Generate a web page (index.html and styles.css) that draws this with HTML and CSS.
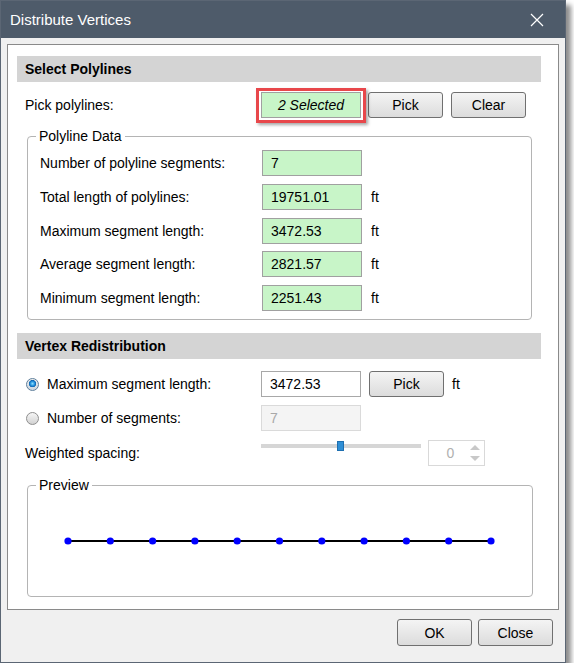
FILE: index.html
```html
<!DOCTYPE html>
<html lang="en">
  <head>
    <meta charset="UTF-8" />
    <meta name="viewport" content="width=device-width, initial-scale=1.0"/>
    <title>Distribute Vertices</title>
    <link rel="stylesheet" href="styles.css">
  </head>
  <body>
    <div class="window">
      <div class="titlebar">
        <span class="title">Distribute Vertices</span>
        <svg class="close" width="14" height="14" viewBox="0 0 14 14">
          <path d="M1 1 L13 13 M13 1 L1 13" stroke="#fff" stroke-width="1.2" fill="none"/>
        </svg>
      </div>
      <div class="content">
        <div class="panel">
          <div class="section-head">Select Polylines</div>
          <div class="pick-row">
            <span class="label">Pick polylines:</span>
            <span class="field green selected">2 Selected</span>
            <button type="button" class="btn">Pick</button>
            <button type="button" class="btn clear">Clear</button>
          </div>

          <fieldset class="group data">
            <legend>Polyline Data</legend>
            <div class="data-row">
              <span class="label">Number of polyline segments:</span>
              <span class="field green">7</span>
            </div>
            <div class="data-row">
              <span class="label">Total length of polylines:</span>
              <span class="field green">19751.01</span>
              <span class="unit">ft</span>
            </div>
            <div class="data-row">
              <span class="label">Maximum segment length:</span>
              <span class="field green">3472.53</span>
              <span class="unit">ft</span>
            </div>
            <div class="data-row">
              <span class="label">Average segment length:</span>
              <span class="field green">2821.57</span>
              <span class="unit">ft</span>
            </div>
            <div class="data-row">
              <span class="label">Minimum segment length:</span>
              <span class="field green">2251.43</span>
              <span class="unit">ft</span>
            </div>
          </fieldset>

          <div class="section-head second">Vertex Redistribution</div>
          <div class="opt-row first">
            <span class="radio checked"></span>
            <span class="opt-label">Maximum segment length:</span>
            <span class="field input">3472.53</span>
            <button type="button" class="btn">Pick</button>
            <span class="unit">ft</span>
          </div>
          <div class="opt-row second-opt">
            <span class="radio"></span>
            <span class="opt-label">Number of segments:</span>
            <span class="field input disabled">7</span>
          </div>
          <div class="opt-row weight">
            <span class="label">Weighted spacing:</span>
            <div class="slider">
              <div class="track"></div>
              <div class="thumb"></div>
            </div>
            <div class="spinner">
              <span class="spin-value">0</span>
              <div class="spin-arrows">
                <svg width="12" height="22" viewBox="0 0 12 22">
                  <path d="M1 8 L6 3 L11 8 Z" fill="#c8c8c8"/>
                  <path d="M1 14 L6 19 L11 14 Z" fill="#c8c8c8"/>
                </svg>
              </div>
            </div>
          </div>

          <fieldset class="group preview">
            <legend>Preview</legend>
            <svg class="preview-line" width="504" height="92" viewBox="0 0 504 92">
              <line x1="40" y1="47" x2="463" y2="47" stroke="#000" stroke-width="2"/>
              <g fill="#0000ff">
                <circle cx="40" cy="47" r="3.6"/>
                <circle cx="82.3" cy="47" r="3.6"/>
                <circle cx="124.6" cy="47" r="3.6"/>
                <circle cx="166.9" cy="47" r="3.6"/>
                <circle cx="209.2" cy="47" r="3.6"/>
                <circle cx="251.5" cy="47" r="3.6"/>
                <circle cx="293.8" cy="47" r="3.6"/>
                <circle cx="336.1" cy="47" r="3.6"/>
                <circle cx="378.4" cy="47" r="3.6"/>
                <circle cx="420.7" cy="47" r="3.6"/>
                <circle cx="463" cy="47" r="3.6"/>
              </g>
            </svg>
          </fieldset>
        </div>
        <div class="footer">
          <button type="button" class="btn wide">OK</button>
          <button type="button" class="btn wide">Close</button>
        </div>
      </div>
    </div>
  </body>
</html>
```

FILE: styles.css
```css
body {
  margin: 0;
  background: #fff;
  font-family: 'Liberation Sans', Arial, sans-serif;
  font-size: 14px;
  color: #000;
}

.window {
  width: 564px;
  height: 661px;
  border: 1px solid #5b6674;
  background: #f0f0f0;
  box-shadow: 5px 5px 5px rgba(0, 0, 0, 0.45);
  display: flex;
  flex-direction: column;
}

.titlebar {
  height: 37px;
  background: #4e5b6a;
  color: #fff;
  display: flex;
  align-items: center;
  justify-content: space-between;
  padding: 0 21px 0 9px;
  flex-shrink: 0;
}

.title {
  font-size: 15px;
}

.content {
  flex: 1;
  display: flex;
  flex-direction: column;
}

.panel {
  margin: 6px 6px 0 6px;
  height: 566px;
  box-sizing: border-box;
  background: #fff;
  border: 1px solid #8a8a8a;
  padding: 11px 17px 0 9px;
}

.section-head {
  height: 26px;
  line-height: 26px;
  background: #d4d4d4;
  font-weight: bold;
  padding-left: 8px;
}

.section-head.second {
  margin-top: 13px;
}

.pick-row {
  display: flex;
  align-items: center;
  height: 28px;
  margin-top: 9px;
  padding-left: 8px;
}

.label {
  width: 236px;
  flex-shrink: 0;
}

.field {
  width: 100px;
  height: 26px;
  box-sizing: border-box;
  line-height: 24px;
  padding-left: 8px;
  border: 1px solid #a0a0a0;
  flex-shrink: 0;
}

.green {
  background: #c8f5c8;
}

.selected {
  position: relative;
  font-style: italic;
  text-align: center;
  padding-left: 0;
}

.selected::after {
  content: "";
  position: absolute;
  left: -6px;
  top: -5px;
  right: -6px;
  bottom: -6px;
  border: 3px solid #e8474b;
  box-shadow: 2px 2px 3px rgba(0, 0, 0, 0.35);
}

.btn {
  width: 75px;
  height: 26px;
  margin-left: 7px;
  font-family: inherit;
  font-size: 14px;
  color: #000;
  border: 1px solid #707070;
  border-radius: 3px;
  background: linear-gradient(#f4f4f4, #dcdcdc);
  padding: 0;
}

.btn.clear {
  margin-left: 8px;
}

.group {
  margin: 0;
  border: 1px solid #b4b4b4;
  border-radius: 4px;
  padding: 0 12px;
}

.group legend {
  padding: 0 3px;
  margin-left: -4px;
  line-height: 18px;
}

.data {
  margin: 8px 9px 0 10px;
  padding-top: 5px;
  padding-bottom: 8px;
  display: flex;
  flex-direction: column;
  gap: 7.75px;
}

.data-row {
  display: flex;
  align-items: center;
  height: 26px;
}

.data-row .label {
  width: 222px;
}

.unit {
  margin-left: 9px;
}

.opt-row {
  display: flex;
  align-items: center;
  height: 26px;
  margin-top: 9px;
  padding-left: 8px;
}

.opt-row.first {
  margin-top: 12px;
}

.opt-row.second-opt {
  margin-top: 8px;
}

.radio {
  width: 13px;
  height: 13px;
  box-sizing: border-box;
  border-radius: 50%;
  border: 1px solid #8e8e8e;
  background: linear-gradient(#f6f6f6, #d2d2d2);
  margin: 0 8px 0 1px;
  flex-shrink: 0;
}

.radio.checked {
  border-color: #5f7f9c;
  background: radial-gradient(circle at 50% 42%, #8fe0ff 0, #2a98e0 2px, #0b63b0 3.4px, rgba(255, 255, 255, 0) 3.9px),
    linear-gradient(#f0f0f0, #cdd6de);
}

.opt-label {
  width: 214px;
  flex-shrink: 0;
}

.input {
  background: #fff;
  border-color: #a8a8a8;
}

.input.disabled {
  background: #f4f4f4;
  border-color: #dadada;
  color: #a8a8a8;
}

.opt-row .btn {
  margin-left: 8px;
}

.opt-row .unit {
  margin-left: 8px;
}

.weight {
  align-items: flex-start;
  height: 26px;
}

.weight .label {
  align-self: center;
}

.slider {
  position: relative;
  width: 160px;
  height: 10px;
  margin-top: 1px;
}

.track {
  margin-top: 3px;
  height: 4px;
  background: #d6d6d6;
}

.thumb {
  position: absolute;
  left: 76px;
  top: 0;
  width: 7px;
  height: 10px;
  box-sizing: border-box;
  background: #2f8fd6;
  border: 1px solid #1e6fb0;
}

.spinner {
  width: 57px;
  height: 26px;
  box-sizing: border-box;
  margin-left: 7px;
  border: 1px solid #d9d9d9;
  background: #fff;
  display: flex;
  align-items: center;
}

.spin-value {
  flex: 1;
  text-align: center;
  color: #b0b0b0;
  padding-left: 6px;
}

.spin-arrows {
  width: 18px;
  display: flex;
  justify-content: center;
}

.preview {
  margin: 10px 9px 0 10px;
  padding: 0;
  height: 121px;
  box-sizing: border-box;
}

.preview legend {
  margin-left: 8px;
}

.preview-line {
  display: block;
}

.footer {
  display: flex;
  justify-content: flex-end;
  padding: 9px 12px 0 0;
}

.footer .btn {
  height: 27px;
  width: 75px;
  margin-left: 6px;
}
```
